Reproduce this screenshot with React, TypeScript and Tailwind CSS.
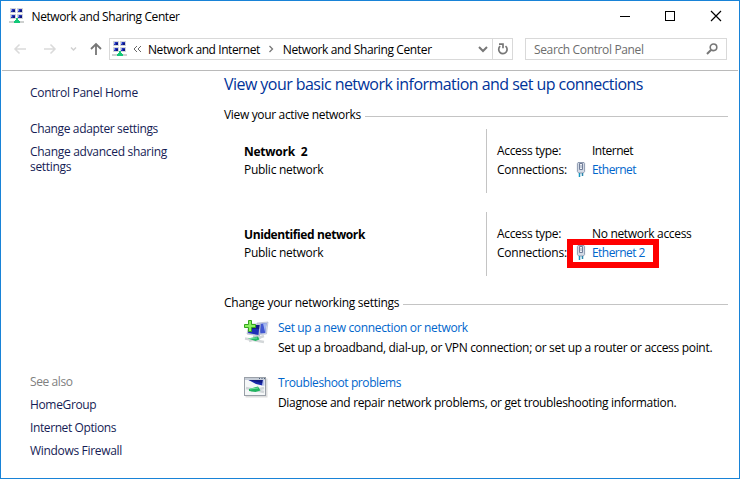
import React from "react";

function NetworkIcon() {
  return (
    <svg width="16" height="16" viewBox="0 0 16 16" shapeRendering="crispEdges" className="shrink-0">
      {[[1, 0], [8, 0], [1, 6], [8, 6]].map(([x, y]) => (
        <g key={`${x}-${y}`}>
          <rect x={x} y={y} width="6" height="5" fill="#d3d5d8" />
          <rect x={x + 1} y={y + 1} width="4" height="3" fill="#2536b8" />
          <rect x={x + 1} y={y + 1} width="1" height="2" fill="#8a9cf0" />
          <rect x={x + 3} y={y + 2} width="2" height="2" fill="#0d1782" />
        </g>
      ))}
      <rect x="7" y="10" width="2" height="3" fill="#18c77c" />
      <rect x="0" y="13" width="15" height="2" fill="#cdd0cf" />
      <rect x="6" y="12" width="4" height="1" fill="#12c878" />
      <rect x="5" y="13" width="6" height="2" fill="#12c878" />
    </svg>
  );
}

function PlugIcon() {
  return (
    <svg width="10" height="17" viewBox="0 0 10 17" className="shrink-0">
      <path d="M2 1.500h6l.6 1v8L7.300 12H2.700L1.400 10.500v-8z" fill="#d3dae6" stroke="#8f9bb0" />
      <path d="M3.500 2.500h3v6h-3z" fill="#eef1f6" stroke="#707d98" />
      <path d="M5 4v3" stroke="#9aa6bb" />
      <path d="M3.500 12v4" stroke="#1597c0" strokeWidth="1.500" />
      <path d="M6.500 12v3" stroke="#2a86ad" strokeWidth="1.500" />
    </svg>
  );
}

function SetupIcon() {
  return (
    <svg width="25" height="25" viewBox="0 0 25 25" className="shrink-0">
      <path d="M13 3l11-1-1.500 12-7 .5z" fill="#d5dbe8" stroke="#aab2c8" strokeWidth=".6" />
      <path d="M15 4l7.500-1-1.200 10-5 .5z" fill="#4258d1" />
      <path d="M19 3.500l3.500-.5-1.200 10z" fill="#a5b8f0" />
      <path d="M5 4l11.500 0-1 12L3 14z" fill="#cbd2e2" stroke="#a5adc0" strokeWidth=".6" />
      <path d="M6 5h9.500l-1 10L4 13z" fill="#1e30b6" />
      <path d="M6 5h9.500l-.4 4Q9 8 5 11z" fill="#101b88" />
      <path d="M9 15.500l8 1v2l-8-1z" fill="#c2c9cf" />
      <path d="M1 18.500l19 3.500M5 21l15-5" stroke="#d3d7d9" strokeWidth="2.500" />
      <path d="M4 18.500l10-2 1.500 3-4 1.500z" fill="#22b765" />
      <path d="M5 18.500l8-.5" stroke="#78e5a3" />
      <path d="M4.500 .5h3v4h4v3h-4v4h-3v-4h-4v-3h4z" fill="#8af060" stroke="#36a51f" />
    </svg>
  );
}

function TroubleshootIcon() {
  return (
    <svg width="24" height="21" viewBox="0 0 24 21" className="shrink-0">
      <rect x="1.500" y="1.500" width="22" height="19" fill="#dedede" />
      <rect x=".5" y=".5" width="21" height="18" fill="#f5f7f8" stroke="#9aa0a8" />
      <path d="M1 2h20" stroke="#c6cdd7" strokeWidth="2" />
      <path d="M15 1.500h1M17.500 1.500h1M20 1.500h1" stroke="#4d5f7b" />
      <path d="M4.500 3h14.500l-.6 5.500L12 7z" fill="#1a2aab" />
      <path d="M4.500 3h14l-.3 3z" fill="#101a80" />
      <path d="M19 3l-.6 5.500 2 .3V3z" fill="#b9c4ea" />
      <path d="M2 11l18 4M7 14l13-3" stroke="#d0d5d8" strokeWidth="2.500" />
      <path d="M5 12l9-2.500 2.500 4-5 1.500-6.500-1z" fill="#20b45f" />
      <path d="M6 12l8-1" stroke="#7ae3a0" />
    </svg>
  );
}

function Connection({ access, name, accessCls, nameCls }: { access: string; name: string; accessCls: string; nameCls: string }) {
  return (
    <div className="flex h-[64px] w-[242px] flex-col justify-start border-l border-[#c4c4c4] pl-[10px] pt-[13px]">
      <div className="flex h-[18px] items-start pt-px">
        <span className="w-[95px] tracking-[-0.32px]">Access type:</span>
        <span className={accessCls}>{access}</span>
      </div>
      <div className="flex h-[19px] items-center">
        <span className="w-[79px] tracking-[-0.24px]">Connections:</span>
        <PlugIcon />
        <span className={"ml-[6px] text-[#0066cc] " + nameCls}>{name}</span>
      </div>
    </div>
  );
}

function SectionTitle({ text, cls }: { text: string; cls: string }) {
  return (
    <div className="flex h-[16px] items-start">
      <span className={cls}>{text}</span>
      <div className="mr-[11px] mt-[9px] h-px flex-1 bg-[#c4c4c4]" />
    </div>
  );
}

export default function App() {
  return (
    <div className="flex h-[479px] w-[740px] flex-col whitespace-nowrap border border-[#1883d7] bg-white font-['Open_Sans','Noto_Sans',sans-serif] text-[12px] leading-[15px] text-black">
      <header className="h-[69px] shrink-0">
        <div className="flex h-[30px] items-center pl-[8px]">
          <NetworkIcon />
          <span className="ml-[6.500px] tracking-[-0.4px]">Network and Sharing Center</span>
          <svg width="102" height="12" viewBox="0 0 102 12" className="ml-auto mr-[17px]" fill="none" stroke="#000" shapeRendering="crispEdges">
            <path d="M0 6.500h10" />
            <rect x="45.500" y="1.500" width="9" height="9" />
            <path d="M91 1l10 10M101 1L91 11" shapeRendering="auto" strokeWidth="1.200" />
          </svg>
        </div>
        <div className="flex h-[36px] items-center">
          <svg width="95" height="16" viewBox="0 0 95 16" className="ml-[12px] shrink-0" fill="none" strokeWidth="1.500">
            <path d="M13 8H2M6.500 3.500L2 8l4.500 4.500M31 8h11M37.500 3.500L42 8l-4.500 4.500" stroke="#dadada" />
            <path d="M58 6.500l2.500 2.500L63 6.500" stroke="#d0d0d0" />
            <path d="M83 14V3M78 8l5-5 5 5" stroke="#767676" strokeWidth="1.800" />
          </svg>
          <div className="ml-[1px] flex h-[22px] w-[404px] items-center border border-[#d9d9d9] pl-[2px]">
            <NetworkIcon />
            <svg width="9" height="8" viewBox="0 0 9 8" className="ml-[5px]" fill="none" stroke="#666">
              <path d="M4 1L1 4l3 3M8 1L5 4l3 3" />
            </svg>
            <span className="ml-[6px] tracking-[-0.43px]">Network and Internet</span>
            <svg width="6" height="8" viewBox="0 0 6 8" className="ml-[8px]" fill="none" stroke="#777" strokeWidth="1.300">
              <path d="M1.500 1l3 3-3 3" />
            </svg>
            <span className="ml-[9px] tracking-[-0.37px]">Network and Sharing Center</span>
            <svg width="10" height="7" viewBox="0 0 10 7" className="ml-auto mr-[4px]" fill="none" stroke="#777" strokeWidth="2">
              <path d="M1 1l4 4 4-4" />
            </svg>
            <div className="flex h-[20px] w-[20px] items-center justify-center border-l border-[#d9d9d9]">
              <svg width="12" height="12" viewBox="0 0 12 12" fill="none" stroke="#777" strokeWidth="1.700">
                <path d="M3.200 3.200A4.200 4.200 0 1 0 8.500 3.100M2 1.200h4v4" />
              </svg>
            </div>
          </div>
          <div className="ml-[12px] flex h-[22px] w-[202px] items-center border border-[#d9d9d9] pl-[8px] pr-[8px] text-[#6d6d6d]">
            <span className="tracking-[-0.36px]">Search Control Panel</span>
            <svg width="12" height="12" viewBox="0 0 12 12" className="ml-auto" fill="none" stroke="#777" strokeWidth="1.600">
              <circle cx="7.500" cy="4.300" r="3.300" />
              <path d="M5.200 6.700L1 11" strokeWidth="2" />
            </svg>
          </div>
        </div>
      </header>
      <div className="mx-px h-px shrink-0 bg-[#bababa]" />
      <div className="flex min-h-0 flex-1">
        <aside className="flex w-[223px] shrink-0 flex-col pb-[20px] pl-[29px] pt-[14px] text-[#151c55]">
          <a className="tracking-[-0.27px]">Control Panel Home</a>
          <a className="mt-[21px] tracking-[-0.35px]">Change adapter settings</a>
          <a className="mt-[8px] tracking-[-0.3px]">Change advanced sharing<br />settings</a>
          <span className="mt-auto tracking-[-0.4px] text-[#808080]">See also</span>
          <a className="mt-[8px] tracking-[-0.35px]">HomeGroup</a>
          <a className="mt-[8px] tracking-[-0.4px]">Internet Options</a>
          <a className="mt-[8px] tracking-[-0.32px]">Windows Firewall</a>
        </aside>
        <main className="min-w-0 flex-1 pt-[2px]">
          <h1 className="h-[22px] text-[16px] leading-[22px] tracking-[-0.55px] text-[#003399]">View your basic network information and set up connections</h1>
          <div className="mt-[12px]">
            <SectionTitle text="View your active networks" cls="mr-[4px] tracking-[-0.34px]" />
          </div>
          <div className="mt-[6px] flex h-[64px]">
            <div className="w-[262px] pl-[20px] pt-[13px]">
              <div className="flex h-[18px] items-center whitespace-pre font-bold tracking-[-0.25px]">{"Network  2"}</div>
              <div className="flex h-[18px] items-center tracking-[-0.27px]">Public network</div>
            </div>
            <Connection access="Internet" name="Ethernet" accessCls="tracking-[-0.48px]" nameCls="tracking-[-0.55px]" />
          </div>
          <div className="relative mt-[19px] flex h-[64px]">
            <div className="w-[262px] pl-[20px] pt-[13px]">
              <div className="flex h-[18px] items-center font-bold tracking-[-0.4px]">Unidentified network</div>
              <div className="flex h-[18px] items-center tracking-[-0.27px]">Public network</div>
            </div>
            <Connection access="No network access" name="Ethernet 2" accessCls="tracking-[-0.32px]" nameCls="tracking-[-0.55px]" />
            <div className="absolute left-[343px] top-[27px] h-[29px] w-[92px] border-[6px] border-[#ff0000]" />
          </div>
          <div className="mt-[19px]">
            <SectionTitle text="Change your networking settings" cls="mr-[4px] tracking-[-0.27px]" />
          </div>
          <div className="mt-[9px] flex h-[38px] pl-[20px]">
            <SetupIcon />
            <div className="ml-[9px]">
              <div className="h-[20px] tracking-[-0.34px] text-[#0066cc]">Set up a new connection or network</div>
              <div className="tracking-[-0.31px]">Set up a broadband, dial-up, or VPN connection; or set up a router or access point.</div>
            </div>
          </div>
          <div className="mt-[17px] flex h-[38px] pl-[20px]">
            <div className="pt-[2px]"><TroubleshootIcon /></div>
            <div className="ml-[10px]">
              <div className="h-[20px] tracking-[-0.4px] text-[#0066cc]">Troubleshoot problems</div>
              <div className="tracking-[-0.34px]">Diagnose and repair network problems, or get troubleshooting information.</div>
            </div>
          </div>
        </main>
      </div>
    </div>
  );
}
